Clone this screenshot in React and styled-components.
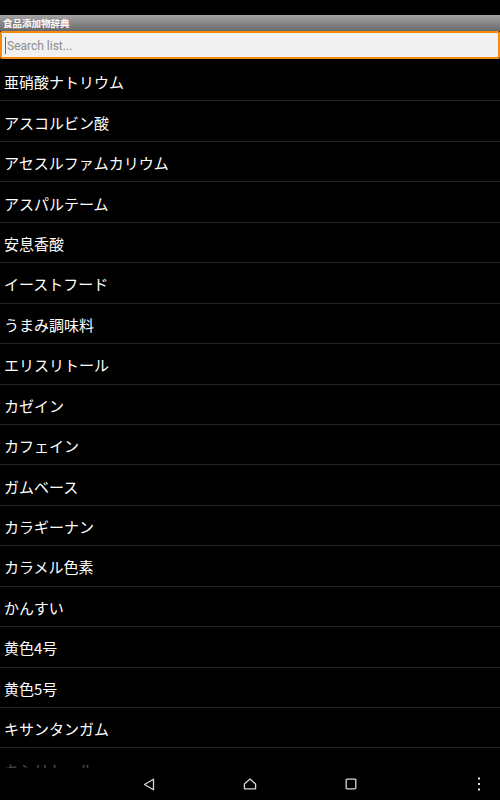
import React from "react";
import styled, { createGlobalStyle } from "styled-components";

const GlobalStyle = createGlobalStyle`
  html, body {
    margin: 0;
    padding: 0;
    background: #000;
  }
  body {
    font-family: "Noto Sans CJK JP", "Noto Sans", sans-serif;
  }
`;

const Screen = styled.div`
  width: 500px;
  height: 800px;
  display: flex;
  flex-direction: column;
  background: #000;
  overflow: hidden;
`;

const StatusBar = styled.div`
  height: 15px;
  flex: none;
  background: #000;
`;

const TitleBar = styled.div`
  height: 16px;
  flex: none;
  display: flex;
  align-items: center;
  padding-left: 3px;
  background: linear-gradient(#a3a3a3, #6a6a6a);
  color: #fff;
  font-size: 9.5px;
  font-weight: 700;
`;

const SearchBox = styled.div`
  height: 28px;
  flex: none;
  box-sizing: border-box;
  display: flex;
  align-items: center;
  gap: 1px;
  padding-left: 3px;
  background: #f1f1f1;
  border: 2px solid #f58a0f;
  border-radius: 2px;
`;

const Caret = styled.span`
  width: 1px;
  height: 17px;
  background: #666;
`;

const Placeholder = styled.span`
  font-family: Roboto, "Liberation Sans", sans-serif;
  font-size: 12px;
  color: #8e8e8e;
  margin-top: 1px;
`;

const List = styled.div`
  position: relative;
  flex: 1;
  overflow: hidden;
  padding-top: 2px;
`;

const Row = styled.div`
  height: 40.44px;
  box-sizing: border-box;
  display: flex;
  align-items: center;
  padding: 2px 0 0 4px;
  border-bottom: 1px solid #262626;
  color: #fff;
  font-size: 15px;
  white-space: nowrap;
`;

const Fade = styled.div`
  position: absolute;
  left: 0;
  right: 0;
  bottom: 0;
  height: 16px;
  background: linear-gradient(rgba(0, 0, 0, 0.2), rgba(0, 0, 0, 0.75));
`;

const NavBar = styled.div`
  height: 32px;
  flex: none;
  display: flex;
  align-items: center;
  padding-left: 134px;
  padding-right: 6px;
  background: #000;
`;

const NavButton = styled.div`
  width: 30px;
  height: 32px;
  display: flex;
  align-items: center;
  justify-content: center;
  margin-right: ${(p) => p.$gap || 0}px;
  margin-left: ${(p) => (p.$end ? "auto" : "0")};
`;

const items = [
  "亜硝酸ナトリウム",
  "アスコルビン酸",
  "アセスルファムカリウム",
  "アスパルテーム",
  "安息香酸",
  "イーストフード",
  "うまみ調味料",
  "エリスリトール",
  "カゼイン",
  "カフェイン",
  "ガムベース",
  "カラギーナン",
  "カラメル色素",
  "かんすい",
  "黄色4号",
  "黄色5号",
  "キサンタンガム",
  "キシリトール",
];

export default function App() {
  return (
    <Screen>
      <GlobalStyle />
      <StatusBar />
      <TitleBar>食品添加物辞典</TitleBar>
      <SearchBox>
        <Caret />
        <Placeholder>Search list...</Placeholder>
      </SearchBox>
      <List>
        {items.map((name) => (
          <Row key={name}>{name}</Row>
        ))}
        <Fade />
      </List>
      <NavBar>
        <NavButton $gap={71}>
          <svg width="12" height="13" viewBox="0 0 12 13">
            <path d="M10.5 1.2 L1.5 6.5 L10.5 11.8 Z" fill="none" stroke="#d8d8d8" strokeWidth="1.3" strokeLinejoin="round" />
          </svg>
        </NavButton>
        <NavButton $gap={71}>
          <svg width="14" height="12" viewBox="0 0 14 12">
            <path d="M7 1 L12.6 6 L12.6 10.8 L1.4 10.8 L1.4 6 Z" fill="none" stroke="#d8d8d8" strokeWidth="1.3" strokeLinejoin="round" />
          </svg>
        </NavButton>
        <NavButton>
          <svg width="12" height="12" viewBox="0 0 12 12">
            <rect x="1.2" y="1.2" width="9.6" height="9.6" rx="0.8" fill="none" stroke="#d8d8d8" strokeWidth="1.3" />
          </svg>
        </NavButton>
        <NavButton $end>
          <svg width="4" height="14" viewBox="0 0 4 14">
            <rect x="1" y="0.5" width="2" height="2" fill="#e6e6e6" />
            <rect x="1" y="6" width="2" height="2" fill="#e6e6e6" />
            <rect x="1" y="11.5" width="2" height="2" fill="#e6e6e6" />
          </svg>
        </NavButton>
      </NavBar>
    </Screen>
  );
}
